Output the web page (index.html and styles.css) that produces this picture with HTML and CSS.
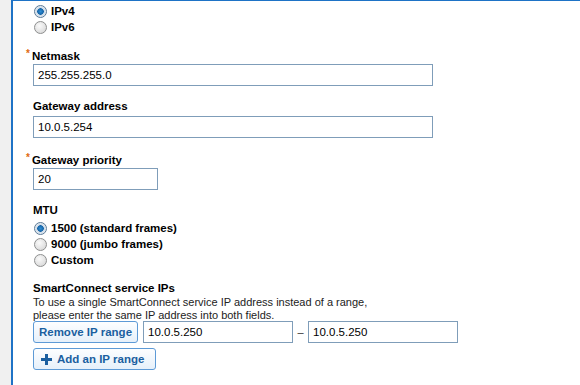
FILE: index.html
```html
<!DOCTYPE html>
<html lang="en">
<head>
  <meta charset="UTF-8">
  <meta name="viewport" content="width=device-width, initial-scale=1.0">
  <title>Network settings</title>
  <link rel="stylesheet" href="styles.css">
</head>
<body>
  <div class="gutter"></div>
  <div class="panel">
    <div class="radios first">
      <div class="radio-row"><span class="radio checked"></span>IPv4</div>
      <div class="radio-row"><span class="radio"></span>IPv6</div>
    </div>

    <div class="field">
      <div class="label"><span class="req">*</span>Netmask</div>
      <div class="input wide">255.255.255.0</div>
    </div>

    <div class="field">
      <div class="label">Gateway address</div>
      <div class="input wide">10.0.5.254</div>
    </div>

    <div class="field">
      <div class="label"><span class="req">*</span>Gateway priority</div>
      <div class="input short">20</div>
    </div>

    <div class="field">
      <div class="label">MTU</div>
      <div class="radios">
        <div class="radio-row"><span class="radio checked"></span>1500 (standard frames)</div>
        <div class="radio-row"><span class="radio"></span>9000 (jumbo frames)</div>
        <div class="radio-row"><span class="radio"></span>Custom</div>
      </div>
    </div>

    <div class="field">
      <div class="label">SmartConnect service IPs</div>
      <p class="hint">To use a single SmartConnect service IP address instead of a range,<br>please enter the same IP address into both fields.</p>
      <div class="range-row">
        <button class="btn">Remove IP range</button>
        <div class="input ip">10.0.5.250</div>
        <span class="dash">–</span>
        <div class="input ip">10.0.5.250</div>
      </div>
      <button class="btn add">
        <svg width="11" height="11" viewBox="0 0 11 11"><path d="M4 0h3v4h4v3H7v4H4V7H0V4h4z" fill="#1b5fa0"/></svg>
        Add an IP range
      </button>
    </div>

    <div class="field">
      <div class="label">SmartConnect zone name</div>
    </div>
  </div>
</body>
</html>
```

FILE: styles.css
```css
body {
  margin: 0;
  display: flex;
  height: 385px;
  overflow: hidden;
  font-family: "Liberation Sans", Arial, sans-serif;
  font-size: 11px;
  color: #000;
  background-color: #fff;
}

.gutter {
  width: 11px;
  background-color: #f0f0f0;
}

.panel {
  flex: 1;
  border-left: 2px solid #1e73c6;
  border-top: 1px solid #1e73c6;
  padding-left: 20px;
}

.radios.first {
  margin-top: 2px;
}

.radio-row {
  display: flex;
  align-items: center;
  height: 16px;
  font-weight: bold;
  font-size: 11.5px;
}

.radio {
  width: 11px;
  height: 11px;
  margin: 0 4px 0 1px;
  border: 1px solid #8e8f8f;
  border-radius: 50%;
  background: radial-gradient(circle at 40% 35%, #fafafa, #d2d2d2);
}

.radio.checked {
  background: radial-gradient(circle, #2f8fd6 0, #1765a8 3px, #c9d8e6 3.5px, #eef2f6 6px);
  border-color: #5c7a96;
}

.field {
  margin-top: 11px;
}

.field + .field {
  margin-top: 12px;
}

.label {
  height: 16px;
  line-height: 16px;
  font-weight: bold;
  font-size: 11.5px;
}

.req {
  color: #e06a10;
  margin-left: -7px;
  margin-right: 2px;
  font-size: 10px;
  vertical-align: 3px;
}

.input {
  box-sizing: border-box;
  height: 22px;
  line-height: 20px;
  margin-top: 2px;
  padding-left: 4px;
  font-size: 11.5px;
  border: 1px solid #7f9db9;
  background: #fff;
}

.input.wide {
  width: 400px;
}

.input.short {
  width: 125px;
}

.input.ip {
  width: 150px;
  margin-top: 0;
}

.field .radios {
  margin-top: 2px;
}

.hint {
  margin: 0;
  font-size: 11px;
  line-height: 13px;
  color: #222;
}

.range-row {
  display: flex;
  align-items: center;
  margin-top: -1px;
}

.dash {
  width: 15px;
  text-align: center;
  color: #333;
}

.btn {
  box-sizing: border-box;
  height: 22px;
  width: 105px;
  margin-right: 5px;
  padding: 0;
  font-family: inherit;
  font-size: 11.5px;
  font-weight: bold;
  color: #1b5fa0;
  border: 1px solid #5d9ad6;
  border-radius: 3px;
  background: linear-gradient(#fdfeff, #e6f0fa);
}

.btn.add {
  width: 123px;
  margin-top: 5px;
  display: flex;
  align-items: center;
  padding-left: 7px;
  gap: 5px;
}
```
